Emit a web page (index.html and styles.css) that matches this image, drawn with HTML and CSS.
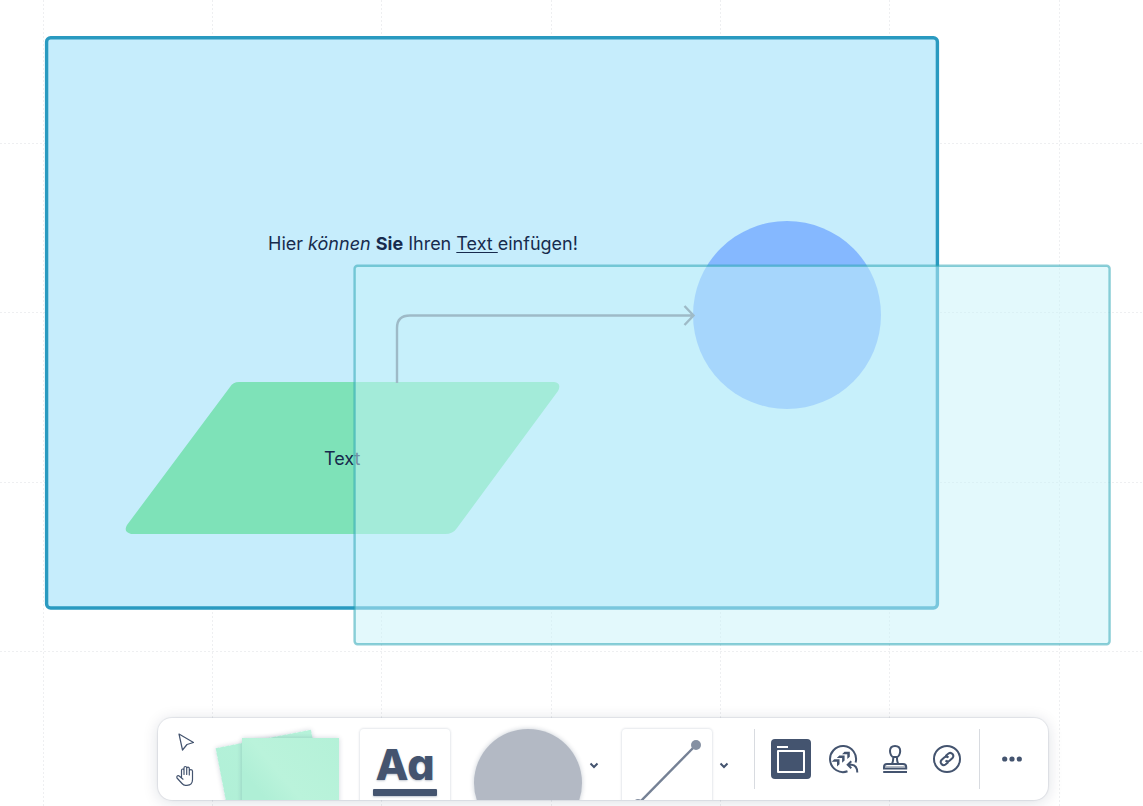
FILE: index.html
```html
<!DOCTYPE html>
<html lang="de">
<head>
<meta charset="utf-8">
<title>Whiteboard</title>
<link rel="stylesheet" href="styles.css">
</head>
<body>
<main class="board">
  <svg class="layer" aria-hidden="true">
    <g class="grid">
      <path d="M43.500 0V2000M212.500 0V2000M381.500 0V2000M551.500 0V2000M720.500 0V2000M889.500 0V2000M1059.500 0V2000"/>
      <path d="M0 143.500H3000M0 312.500H3000M0 482.500H3000M0 651.500H3000"/>
    </g>
    <rect class="frame" x="46.600" y="37.700" width="890.800" height="570.300" rx="4"/>
    <circle class="disc" cx="787" cy="315" r="94"/>
    <path class="slant" d="M239 382H554Q562 383 558 391L457 528Q453 534 445 534H131Q123 532 127 525L230 387Q233 382 239 382Z"/>
    <path class="arrow" d="M397 383V328Q397 315.500 410 315.500H693M684.500 306L693.500 315.500L684.500 325"/>
  </svg>
  <p class="note note-main">Hier <em>können</em> <strong>Sie</strong> Ihren <u>Text </u>einfügen!</p>
  <p class="note note-shape">Text</p>
  <svg class="layer" aria-hidden="true">
    <rect class="veil" x="354.600" y="265.800" width="755" height="378.400" rx="3"/>
  </svg>

  <nav class="toolbar" aria-label="Werkzeuge">
    <div class="pointers">
      <button class="btn small" aria-label="Auswählen">
        <svg width="18" height="20" viewBox="0 0 18 20"><path class="thin" d="M2 2L16.500 10.500L10 12.500L5.500 18Z"/></svg>
      </button>
      <button class="btn small" aria-label="Verschieben">
        <svg width="20" height="22" viewBox="0 0 20 22"><path class="thin" d="M5.500 13V5.500Q5.500 4 6.700 4T8 5.500V9.500M8 9V3Q8 1.500 9.300 1.500T10.700 3V9.500M10.700 9V3.500Q10.700 2.200 12 2.200T13.300 3.500V10M13.300 9.500V6Q13.300 4.700 14.800 4.700T16.500 6V14.500Q16.500 20.300 11 20.300H9.500Q7.500 20.300 6 18.500L1 13Q0.500 11.500 1.600 10.800Q2.500 10.300 3.500 11.200L7 14.200"/></svg>
      </button>
    </div>
    <button class="btn notes" aria-label="Haftnotiz"><span class="sheet back"></span><span class="sheet front"></span></button>
    <button class="btn card text-card" aria-label="Text"><span class="letters">Aa</span><span class="bar"></span></button>
    <button class="btn shape" aria-label="Form"></button>
    <button class="btn chevron" aria-label="Weitere Formen"><svg width="10" height="8" viewBox="0 0 10 8"><path class="tick" d="M1.500 2.500L5 6L8.500 2.500"/></svg></button>
    <button class="btn card line-card" aria-label="Linie">
      <svg width="90" height="108" viewBox="0 0 90 108"><path class="rule" d="M16 75L74 16"/><circle class="knob" cx="74" cy="16" r="5"/><circle class="knob" cx="16" cy="75" r="5"/></svg>
    </button>
    <button class="btn chevron" aria-label="Weitere Linien"><svg width="10" height="8" viewBox="0 0 10 8"><path class="tick" d="M1.500 2.500L5 6L8.500 2.500"/></svg></button>
    <div class="group first">
      <button class="btn tool active" aria-label="Rahmen">
        <svg width="40" height="40" viewBox="0 0 40 40"><path class="white" stroke-linejoin="round" d="M6 8H17M7 12H33V33H7Z"/></svg>
      </button>
      <button class="btn tool" aria-label="Vorlagen">
        <svg width="40" height="40" viewBox="0 0 40 40"><path class="line" d="M24.500 32.300A13 13 0 1 1 32.600 23.500"/><path class="fill" d="M21 13.300H26.300V18.300L23.800 20.500V15.800H18.500ZM15.800 17H21.100V22L18.600 24.200V19.500H13.300ZM10.700 20.700H16V25.700L13.500 27.900V23.200H8.200Z" transform="translate(0.500 -0.500)"/><path class="line" d="M28.300 22.300L24.700 25.700L28.300 29.300M25 25.700H28.500Q34.300 26.200 34.300 33.500"/></svg>
      </button>
      <button class="btn tool" aria-label="Stempel">
        <svg width="40" height="40" viewBox="0 0 40 40"><path class="line" d="M15 12C15 8.500 17 7 20 7S25.200 8.500 25.200 12C25.200 15 23.500 18 22 18H18.200C16.700 18 15 15 15 12ZM18.200 18Q18.500 22 17 25M22 18Q21.700 22 23.200 25M9 29.500V28Q9 25 12 25H28Q31.200 25 31.200 28V29.500ZM8.200 33H32"/><path class="hair" d="M10 27.500H30"/></svg>
      </button>
      <button class="btn tool" aria-label="Link">
        <svg width="40" height="40" viewBox="0 0 40 40"><circle class="line" cx="20" cy="20" r="13"/><path class="line" d="M18.500 17L21.500 14.500Q23.700 13 25.500 15Q27.200 17 25.500 19L22.500 21.700Q20.500 23.200 18.500 21.500M21.500 23L18.500 25.500Q16.300 27.200 14.500 25Q12.800 23 14.500 21L17.500 18.300Q19.500 16.800 21.500 18.500"/></svg>
      </button>
    </div>
    <div class="group">
      <button class="btn tool" aria-label="Mehr"><svg width="40" height="40" viewBox="0 0 40 40"><g class="fill"><circle cx="12.700" cy="20" r="2.600"/><circle cx="20" cy="20" r="2.600"/><circle cx="27.300" cy="20" r="2.600"/></g></svg></button>
    </div>
  </nav>
</main>
</body>
</html>
```
FILE: styles.css
```css
* { box-sizing: border-box; }
body { margin: 0; background: #fff; font-family: Inter, "Liberation Sans", sans-serif; color: #172b4d; }
svg { display: block; }

.board { position: relative; height: 100vh; overflow: hidden; }
.layer { position: absolute; inset: 0; width: 100%; height: 100%; }
.grid { fill: none; stroke: #eeeff1; stroke-width: 1; stroke-dasharray: 2 2; }
.frame { fill: #c6edfc; stroke: #2a9ac0; stroke-width: 3.4; }
.disc { fill: #85b8ff; }
.slant { fill: #7ee2b8; }
.arrow { fill: none; stroke: #758195; stroke-width: 2.4; }
.veil { fill: rgb(200 243 249 / 50%); stroke: rgb(32 160 176 / 50%); stroke-width: 2.4; }

.note { position: absolute; margin: 0; font-size: 18px; line-height: 24px; white-space: pre; }
.note-main { left: 268px; top: 232px; }
.note-shape { left: 324px; top: 447px; }
.note u { text-underline-offset: 2px; }

.toolbar {
  position: absolute; left: 158px; bottom: 6px; height: 82px;
  display: flex; align-items: flex-start;
  padding: 11px 16px 0 12px; overflow: hidden;
  background: #fff; border-radius: 14px;
  box-shadow: 0 0 1px 1px rgb(9 30 66 / 8%), 0 2px 16px rgb(9 30 66 / 14%);
}
.btn { border: 0; padding: 0; background: none; color: #44546f; font-family: inherit; flex: none; cursor: pointer; }
.pointers { display: flex; flex-direction: column; gap: 8px; width: 32px; margin-right: 14px; }
.small { display: grid; place-items: center; height: 26px; }
.thin { fill: none; stroke: #44546f; stroke-width: 1.2; stroke-linejoin: round; stroke-linecap: round; }

.notes { position: relative; width: 124px; height: 108px; margin-right: 20px; }
.sheet { position: absolute; width: 97px; height: 97px; background: linear-gradient(45deg, #afefd6, #b6f2da); box-shadow: 0 0 5px rgb(9 30 66 / 18%); }
.back { left: 8px; top: 9px; transform: rotate(-11deg); }
.front { left: 26px; top: 9px; background: linear-gradient(50deg, #afefd6 30%, #baf3db 50%, #b4f1d8); }

.card { width: 90px; height: 108px; border-radius: 4px; background: #fff; box-shadow: 0 0 2px 1px rgb(9 30 66 / 10%); }
.text-card { display: flex; flex-direction: column; align-items: center; gap: 2px; padding-top: 12px; margin-right: 24px; }
.letters { font-size: 43px; font-weight: 800; line-height: 46px; font-feature-settings: "cv11"; text-shadow: 0 1px 2px rgb(9 30 66 / 25%); }
.bar { width: 64px; height: 7px; border-radius: 1px; background: #44546f; box-shadow: 0 1px 2px rgb(9 30 66 / 25%); }
.shape { width: 108px; height: 108px; border-radius: 50%; background: #b3b9c4; box-shadow: 0 0 5px rgb(9 30 66 / 22%); }
.chevron { display: grid; place-items: center; width: 24px; height: 72px; }
.tick { fill: none; stroke: #44546f; stroke-width: 2; }
.line-card { margin-left: 16px; }
.rule { stroke: #758195; stroke-width: 2.4; }
.knob { fill: #8590a2; }

.group { display: flex; align-items: center; gap: 12px; height: 60px; padding-left: 12px; margin-left: 12px; border-left: 1px solid #d8dbe0; }
.first { margin-left: 18px; padding-left: 16px; }
.tool { width: 40px; height: 40px; border-radius: 4px; }
.active { background: #44546f; }
.white { fill: none; stroke: #fff; stroke-width: 2; }
.line { fill: none; stroke: #44546f; stroke-width: 2; }
.hair { fill: none; stroke: #44546f; stroke-width: 1; opacity: 0.4; }
.fill { fill: #44546f; }
```
